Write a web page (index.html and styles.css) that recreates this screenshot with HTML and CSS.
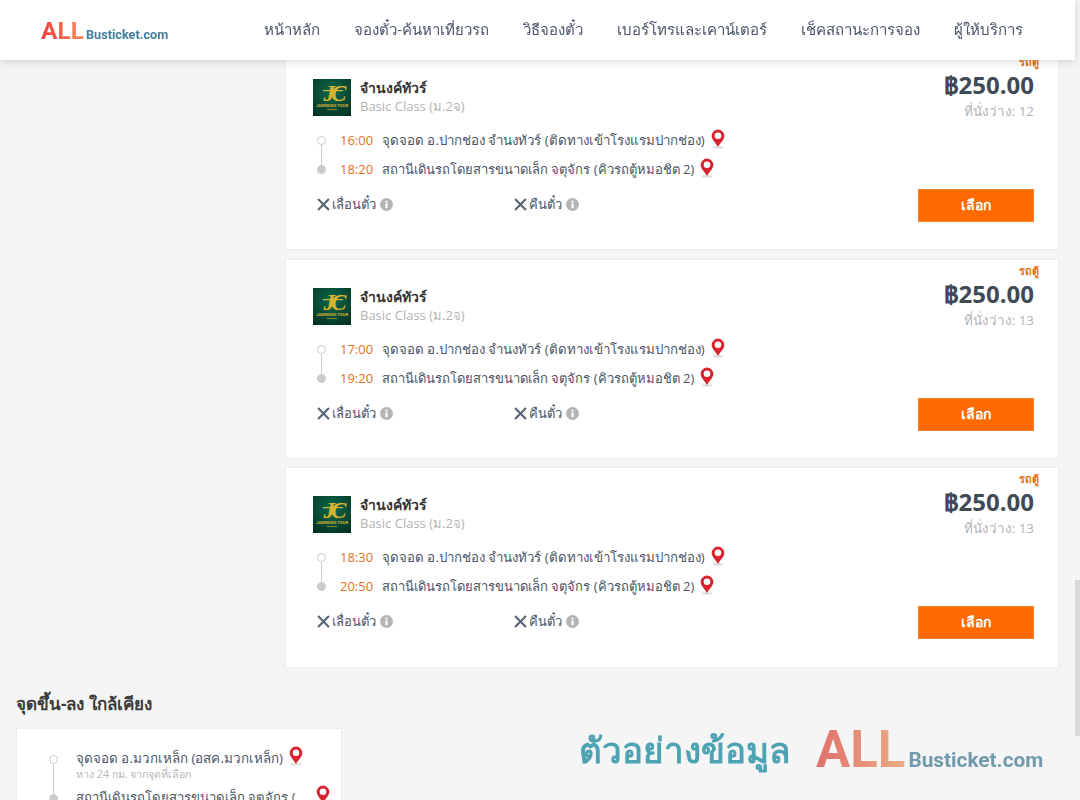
FILE: index.html
```html
<!DOCTYPE html>
<html lang="th">
<head>
<meta charset="utf-8">
<title>ALLBusticket</title>
<link rel="stylesheet" href="styles.css">
</head>
<body>
<svg class="defs" width="0" height="0">
  <defs>
    <symbol id="pin" viewBox="0 0 14 20">
      <ellipse cx="7" cy="18.4" rx="5.5" ry="1.2" fill="#ddd"/>
      <path d="M7 .6a6.3 6.3 0 0 0-6.3 6.3c0 3.9 4.2 7 6.3 11 2.1-4 6.3-7.1 6.3-11A6.3 6.3 0 0 0 7 .6z" fill="#d9232e"/>
      <circle cx="7" cy="6.8" r="3.3" fill="#fff"/>
    </symbol>
    <symbol id="cross" viewBox="0 0 12 12">
      <path d="M1 1l10 10M11 1L1 11" stroke="#5a6675" stroke-width="2" fill="none"/>
    </symbol>
    <symbol id="info" viewBox="0 0 12 12">
      <circle cx="6" cy="6" r="6" fill="#b5b5b5"/>
      <rect x="5" y="5" width="2" height="4.4" fill="#fff"/>
      <rect x="5" y="2.5" width="2" height="1.7" fill="#fff"/>
    </symbol>
    <radialGradient id="green" cx=".5" cy=".35" r=".8">
      <stop offset="0" stop-color="#0c6a4e"/>
      <stop offset="1" stop-color="#04301f"/>
    </radialGradient>
    <symbol id="brand" viewBox="0 0 38 37">
      <rect width="38" height="37" fill="url(#green)"/>
      <text x="20" y="22" text-anchor="middle" font-size="23" font-weight="700" font-style="italic" letter-spacing="-4" fill="#d9b52f" font-family="Liberation Serif, serif">JC</text>
      <rect x="10" y="11" width="20" height="1.2" fill="#d9b52f"/>
      <text x="19" y="27.5" text-anchor="middle" font-size="4.2" font-weight="700" fill="#d4b12f" font-family="Roboto, sans-serif">JAMNONG TOUR</text>
      <rect x="14" y="30" width="10" height=".8" fill="#a59238"/>
    </symbol>
  </defs>
</svg>

<header class="topbar">
  <a class="logo"><span class="logo-all">ALL</span><span class="logo-rest">Busticket.com</span></a>
  <nav class="nav">
    <a>หน้าหลัก</a>
    <a>จองตั๋ว-ค้นหาเที่ยวรถ</a>
    <a>วิธีจองตั๋ว</a>
    <a>เบอร์โทรและเคาน์เตอร์</a>
    <a>เช็คสถานะการจอง</a>
    <a>ผู้ให้บริการ</a>
  </nav>
</header>

<main class="page">
  <section class="results">
    <article class="card">
      <span class="tag">รถตู้</span>
      <div class="card-left">
        <div class="operator">
          <svg class="brand"><use href="#brand"/></svg>
          <div class="op-text"><div class="op-name">จำนงค์ทัวร์</div><div class="op-class">Basic Class (ม.2จ)</div></div>
        </div>
        <div class="route">
          <div class="stop"><i class="dot"></i><span class="time">16:00</span><span class="place">จุดจอด อ.ปากช่อง จำนงทัวร์ (ติดทางเข้าโรงแรมปากช่อง)</span><svg class="pin"><use href="#pin"/></svg></div>
          <div class="stop"><i class="dot end"></i><span class="time">18:20</span><span class="place">สถานีเดินรถโดยสารขนาดเล็ก จตุจักร (คิวรถตู้หมอชิต 2)</span><svg class="pin"><use href="#pin"/></svg></div>
        </div>
        <div class="policy">
          <span class="pol"><svg class="cross"><use href="#cross"/></svg>เลื่อนตั๋ว<svg class="info"><use href="#info"/></svg></span>
          <span class="pol"><svg class="cross"><use href="#cross"/></svg>คืนตั๋ว<svg class="info"><use href="#info"/></svg></span>
        </div>
      </div>
      <div class="card-right">
        <div class="price">฿250.00</div>
        <div class="seats">ที่นั่งว่าง: 12</div>
        <button class="select">เลือก</button>
      </div>
    </article>

    <article class="card">
      <span class="tag">รถตู้</span>
      <div class="card-left">
        <div class="operator">
          <svg class="brand"><use href="#brand"/></svg>
          <div class="op-text"><div class="op-name">จำนงค์ทัวร์</div><div class="op-class">Basic Class (ม.2จ)</div></div>
        </div>
        <div class="route">
          <div class="stop"><i class="dot"></i><span class="time">17:00</span><span class="place">จุดจอด อ.ปากช่อง จำนงทัวร์ (ติดทางเข้าโรงแรมปากช่อง)</span><svg class="pin"><use href="#pin"/></svg></div>
          <div class="stop"><i class="dot end"></i><span class="time">19:20</span><span class="place">สถานีเดินรถโดยสารขนาดเล็ก จตุจักร (คิวรถตู้หมอชิต 2)</span><svg class="pin"><use href="#pin"/></svg></div>
        </div>
        <div class="policy">
          <span class="pol"><svg class="cross"><use href="#cross"/></svg>เลื่อนตั๋ว<svg class="info"><use href="#info"/></svg></span>
          <span class="pol"><svg class="cross"><use href="#cross"/></svg>คืนตั๋ว<svg class="info"><use href="#info"/></svg></span>
        </div>
      </div>
      <div class="card-right">
        <div class="price">฿250.00</div>
        <div class="seats">ที่นั่งว่าง: 13</div>
        <button class="select">เลือก</button>
      </div>
    </article>

    <article class="card">
      <span class="tag">รถตู้</span>
      <div class="card-left">
        <div class="operator">
          <svg class="brand"><use href="#brand"/></svg>
          <div class="op-text"><div class="op-name">จำนงค์ทัวร์</div><div class="op-class">Basic Class (ม.2จ)</div></div>
        </div>
        <div class="route">
          <div class="stop"><i class="dot"></i><span class="time">18:30</span><span class="place">จุดจอด อ.ปากช่อง จำนงทัวร์ (ติดทางเข้าโรงแรมปากช่อง)</span><svg class="pin"><use href="#pin"/></svg></div>
          <div class="stop"><i class="dot end"></i><span class="time">20:50</span><span class="place">สถานีเดินรถโดยสารขนาดเล็ก จตุจักร (คิวรถตู้หมอชิต 2)</span><svg class="pin"><use href="#pin"/></svg></div>
        </div>
        <div class="policy">
          <span class="pol"><svg class="cross"><use href="#cross"/></svg>เลื่อนตั๋ว<svg class="info"><use href="#info"/></svg></span>
          <span class="pol"><svg class="cross"><use href="#cross"/></svg>คืนตั๋ว<svg class="info"><use href="#info"/></svg></span>
        </div>
      </div>
      <div class="card-right">
        <div class="price">฿250.00</div>
        <div class="seats">ที่นั่งว่าง: 13</div>
        <button class="select">เลือก</button>
      </div>
    </article>
  </section>

  <section class="nearby">
    <h2 class="nearby-title">จุดขึ้น-ลง ใกล้เคียง</h2>
    <div class="nearby-panel">
      <div class="near-row"><i class="dot"></i><div class="near-text"><div class="near-name">จุดจอด อ.มวกเหล็ก (อสค.มวกเหล็ก)<svg class="pin"><use href="#pin"/></svg></div><div class="near-dist">ห่าง 24 กม. จากจุดที่เลือก</div></div></div>
      <div class="near-row"><i class="dot end"></i><div class="near-text"><div class="near-name near-second">สถานีเดินรถโดยสารขนาดเล็ก จตุจักร (<svg class="pin"><use href="#pin"/></svg></div></div></div>
    </div>
  </section>
</main>

<div class="watermark"><span class="wm-text">ตัวอย่างข้อมูล</span><span class="wm-logo"><span class="logo-all">ALL</span><span class="logo-rest">Busticket.com</span></span></div>
<div class="scrollbar"><div class="thumb"></div></div>
</body>
</html>
```
FILE: styles.css
```css
* { box-sizing: border-box; }
html, body { margin: 0; height: 800px; overflow: hidden; }
body { background: #f5f5f5; color: #3f4a57; font-family: "Open Sans", "Noto Sans", sans-serif; font-size: 14px; }
.defs { position: absolute; }

.topbar { position: fixed; top: 0; left: 0; width: 1075px; height: 60px; background: #fff; box-shadow: 0 2px 8px rgba(0,0,0,.14); display: flex; align-items: center; justify-content: space-between; padding: 0 52px 0 41px; z-index: 5; }
.logo { display: flex; align-items: baseline; font-family: Roboto, sans-serif; font-weight: 700; padding-top: 3px; }
.logo-all { font-size: 24.5px; line-height: 1; background: linear-gradient(90deg, #f2413c, #f98a5a); -webkit-background-clip: text; background-clip: text; color: transparent; }
.logo-rest { font-size: 12.7px; color: #3f7f9e; margin-left: 2px; }
.nav { display: flex; gap: 34px; font-size: 15px; color: #4a5568; }

.page { display: flex; flex-direction: column; padding-top: 50px; }
.results { display: flex; flex-direction: column; gap: 9px; margin-left: 285px; width: 774px; }
.card { position: relative; height: 200px; background: #fff; border: 1px solid #eee; padding: 28px 24px 0 27px; display: flex; justify-content: space-between; }
.card:last-child { margin-top: -1px; height: 201px; }
.tag { position: absolute; top: 4px; right: 19px; font-size: 11px; font-weight: 700; color: #e8701a; line-height: 14px; }
.operator { display: flex; gap: 9px; align-items: center; height: 37px; }
.brand { width: 38px; height: 37px; display: block; }
.op-text { margin-top: -2px; }
.op-name { font-size: 14px; font-weight: 600; color: #333; line-height: 19px; }
.op-class { font-size: 13px; color: #b3b3b3; line-height: 18px; }
.route { margin-top: 9px; }
.stop { position: relative; display: flex; align-items: center; height: 29px; font-size: 13.3px; }
.stop + .stop { font-size: 13px; }
.stop .time { color: #e8701a; margin-left: 27px; width: 42px; font-size: 13px; }
.dot { position: absolute; left: 4px; top: 11px; width: 9px; height: 9px; border-radius: 50%; border: 1px solid #ccc; background: #fff; }
.dot.end { background: #ccc; }
.stop:first-child .dot::after { content: ""; position: absolute; left: 3px; top: 8px; width: 1px; height: 21px; background: #ccc; }
.place { color: #4a5568; padding-top: 2px; }
.pin { width: 14px; height: 20px; margin: -1px 0 0 6px; flex: none; vertical-align: -3px; }
.policy { display: flex; margin-top: 10px; margin-left: 4px; height: 22px; font-size: 13px; color: #4a5568; }
.pol { display: flex; align-items: center; width: 197px; }
.cross { width: 13px; height: 13px; margin-right: 2px; }
.info { width: 13px; height: 13px; margin-left: 4px; }
.card-right { display: flex; flex-direction: column; align-items: flex-end; }
.price { font-size: 24px; font-weight: 700; line-height: 32px; margin-top: -10px; color: #3f4a57; }
.seats { font-size: 13.4px; color: #b3b3b3; line-height: 18px; margin-top: 1px; }
.select { margin-top: 69px; width: 116px; height: 33px; background: #ff6a00; border: 1px solid #f58432; color: #fff; font: 600 14px "Open Sans", sans-serif; padding: 0 0 2px; }

.nearby { padding: 23px 0 0 16px; }
.nearby-title { margin: 0 0 12px; font-size: 17px; font-weight: 700; color: #3a3a3a; line-height: 25px; }
.nearby-panel { width: 326px; height: 200px; background: #fff; border: 1px solid #eee; padding-top: 18px; }
.near-row { position: relative; padding-left: 59px; }
.near-row .dot { left: 32px; top: 8px; }
.near-row:first-child .dot::after { content: ""; position: absolute; left: 3px; top: 8px; width: 1px; height: 40px; background: #ccc; }
.near-name { font-size: 13.4px; color: #4a5568; line-height: 20px; white-space: nowrap; }
.near-second { font-size: 13.1px; }
.near-second .pin { margin-left: 20px; }
.near-dist { font-size: 10.7px; color: #b8b8b8; line-height: 12px; margin-bottom: 6px; }

.watermark { position: fixed; left: 579px; top: 724px; display: flex; align-items: baseline; gap: 26px; opacity: .85; }
.wm-text { font-size: 35px; font-weight: 700; color: #2f95a8; transform: translateY(-4px); }
.wm-logo { display: flex; align-items: baseline; font-family: Roboto, sans-serif; font-weight: 700; }
.wm-logo .logo-all { font-size: 51px; background: linear-gradient(90deg, #dd5a55, #e8a070); -webkit-background-clip: text; background-clip: text; }
.wm-logo .logo-rest { font-size: 20.8px; margin-left: 3px; color: #5a8aa0; }

.scrollbar { position: fixed; right: 0; top: 0; width: 5px; height: 800px; }
.thumb { margin-top: 580px; height: 156px; background: #d8d8d8; }
```
